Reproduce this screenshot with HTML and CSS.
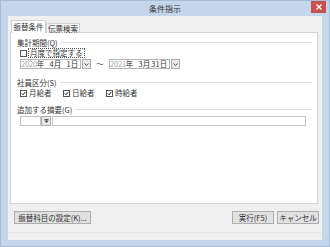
FILE: index.html
```html
<!DOCTYPE html>
<html lang="ja">
<head>
<meta charset="utf-8">
<title>条件指示</title>
<link rel="stylesheet" href="styles.css">
</head>
<body>
<div class="window">
  <div class="titlebar"><span class="title">条件指示</span></div>
  <div class="close"><svg width="6" height="6" viewBox="0 0 6 6"><path d="M0.5 0.5L5.5 5.5M5.5 0.5L0.5 5.5" stroke="#fff" stroke-width="1.3"/></svg></div>
  <div class="client">
    <div class="tabarea">
      <div class="tabs">
        <div class="tab active">振替条件</div>
        <div class="tab">伝票検索</div>
      </div>
      <div class="panel">
        <div class="group-head"><span>集計期間(Q)</span><i class="rule"></i></div>
        <div class="row chk-row">
          <span class="cb"></span><span class="focus">月度で指定する</span>
        </div>
        <div class="row date-row">
          <div class="datebox"><span class="yr"><span class="dim">2020</span>年</span><span class="md">4月</span><span class="md">1日</span></div>
          <div class="dd"><svg width="5" height="3" viewBox="0 0 5 3"><path d="M0.5 0.5L2.5 2.5L4.5 0.5" fill="none" stroke="#444" stroke-width="0.9"/></svg></div>
          <span class="tilde">〜</span>
          <div class="datebox"><span class="yr"><span class="dim">2021</span>年</span><span class="md">3月</span><span class="md">31日</span></div>
          <div class="dd"><svg width="5" height="3" viewBox="0 0 5 3"><path d="M0.5 0.5L2.5 2.5L4.5 0.5" fill="none" stroke="#444" stroke-width="0.9"/></svg></div>
        </div>
        <div class="group-head g2"><span>社員区分(S)</span><i class="rule"></i></div>
        <div class="row chk-row">
          <span class="opt"><span class="cb on"><svg width="5" height="5" viewBox="0 0 5 5"><path d="M0.6 2.4L2 3.8L4.4 0.9" fill="none" stroke="#222" stroke-width="1"/></svg></span>月給者</span>
          <span class="opt"><span class="cb on"><svg width="5" height="5" viewBox="0 0 5 5"><path d="M0.6 2.4L2 3.8L4.4 0.9" fill="none" stroke="#222" stroke-width="1"/></svg></span>日給者</span>
          <span class="opt"><span class="cb on"><svg width="5" height="5" viewBox="0 0 5 5"><path d="M0.6 2.4L2 3.8L4.4 0.9" fill="none" stroke="#222" stroke-width="1"/></svg></span>時給者</span>
        </div>
        <div class="group-head g3"><span>追加する摘要(G)</span><i class="rule"></i></div>
        <div class="row input-row">
          <div class="inp small"></div>
          <div class="dd2"><svg width="5" height="5" viewBox="0 0 5 5"><path d="M0.5 1.5H4.5L2.5 4Z" fill="#333"/><path d="M0.5 0.5H4.5" stroke="#333" stroke-width="0.8"/></svg></div>
          <div class="inp wide"></div>
        </div>
      </div>
    </div>
    <div class="buttons">
      <button class="btn b1">振替科目の設定(K)...</button>
      <span class="spacer"></span>
      <button class="btn b2">実行(F5)</button>
      <button class="btn b2">キャンセル</button>
    </div>
    <div class="status"></div>
  </div>
</div>
</body>
</html>
```

FILE: styles.css
```css
html, body {
  margin: 0;
  padding: 0;
  background: #fff;
}
body {
  font-family: "Noto Sans CJK JP", "Noto Sans", sans-serif;
  font-size: 7.5px;
  color: #333;
  white-space: nowrap;
}
.window {
  width: 330px;
  height: 247px;
  box-sizing: border-box;
  background: #c4d6ec;
  border: 1px solid #a9bdd6;
  padding: 0 7px 6px 7px;
  display: flex;
  flex-direction: column;
  position: relative;
}
.titlebar {
  height: 15px;
  display: flex;
  align-items: center;
  justify-content: center;
}
.title {
  font-size: 8px;
  color: #333;
  line-height: 8px;
}
.close {
  position: absolute;
  top: 0;
  right: 3px;
  width: 15px;
  height: 12px;
  background: #c75050;
  display: flex;
  align-items: center;
  justify-content: center;
}
.client {
  flex: 1;
  background: #f0f0f0;
  display: flex;
  flex-direction: column;
}
.tabarea {
  padding: 5px 4px 0 2px;
}
.tabs {
  display: flex;
  align-items: flex-end;
  height: 12px;
  padding-left: 1px;
  position: relative;
  z-index: 1;
  margin-bottom: -1px;
}
.tab {
  box-sizing: border-box;
  height: 10px;
  width: 34px;
  border: 1px solid #d0d0d0;
  border-bottom: none;
  background: #f3f3f3;
  line-height: 9px;
  text-align: center;
  font-size: 7.5px;
}
.tab.active {
  height: 13px;
  width: 35px;
  background: #fff;
  line-height: 12px;
}
.panel {
  box-sizing: border-box;
  height: 172px;
  background: #fff;
  border: 1px solid #d4d4d4;
  padding: 5px 5px 0 6px;
  display: flex;
  flex-direction: column;
}
.group-head {
  display: flex;
  align-items: center;
  height: 9px;
  line-height: 9px;
}
.group-head .rule {
  flex: 1;
  height: 1px;
  background: #dedede;
  margin-left: 3px;
}
.g2 { margin-top: 9px; }
.g3 { margin-top: 8px; }
.row {
  display: flex;
  align-items: center;
  padding-left: 3px;
}
.chk-row {
  height: 8px;
  margin-top: 2px;
  line-height: 8px;
}
.cb {
  box-sizing: border-box;
  width: 7px;
  height: 7px;
  border: 1px solid #555;
  background: #fff;
  display: inline-flex;
  align-items: center;
  justify-content: center;
  margin-right: 2px;
  flex: none;
}
.focus {
  outline: 1px dotted #555;
  outline-offset: 0;
  line-height: 8px;
  height: 8px;
  padding: 0 1px;
}
.opt {
  display: inline-flex;
  align-items: center;
  width: 43px;
  height: 8px;
  line-height: 8px;
}
.date-row {
  height: 10px;
  margin-top: 2px;
}
.datebox {
  box-sizing: border-box;
  width: 61px;
  height: 10px;
  border: 1px solid #b5b5b5;
  background: #fff;
  display: flex;
  align-items: center;
  line-height: 8px;
  overflow: hidden;
}
.yr {
  flex: none;
  letter-spacing: -0.2px;
}
.dim {
  color: #a5a5a5;
}
.md {
  flex: none;
  width: 17px;
  text-align: right;
}
.dd {
  box-sizing: border-box;
  width: 9px;
  height: 10px;
  margin-left: 1px;
  border: 1px solid #acacac;
  background: #e8e8e8;
  display: flex;
  align-items: center;
  justify-content: center;
}
.tilde {
  width: 18px;
  text-align: center;
  line-height: 8px;
}
.input-row {
  height: 10px;
  margin-top: 2px;
}
.inp {
  box-sizing: border-box;
  height: 10px;
  border: 1px solid #c4c4c4;
  background: #fff;
}
.inp.small { width: 21px; }
.inp.wide { flex: 1; margin-left: 1px; margin-right: 6px; }
.dd2 {
  box-sizing: border-box;
  width: 10px;
  height: 10px;
  border: 1px solid #adadad;
  background: #e6e6e6;
  display: flex;
  align-items: center;
  justify-content: center;
}
.buttons {
  display: flex;
  padding: 0 3px 0 6px;
  margin-top: 7px;
  height: 13px;
  gap: 3px;
}
.spacer { flex: 1; }
.btn {
  box-sizing: border-box;
  height: 13px;
  margin: 0;
  padding: 0;
  border: 1px solid #adadad;
  background: #e1e1e1;
  font-family: "Noto Sans CJK JP", "Noto Sans", sans-serif;
  font-size: 7.5px;
  color: #333;
  line-height: 11px;
}
.b1 { width: 77px; }
.b2 { width: 42px; }
.status {
  flex: 1;
  margin-top: 8px;
  border-top: 1px solid #e4e4e4;
}
```
